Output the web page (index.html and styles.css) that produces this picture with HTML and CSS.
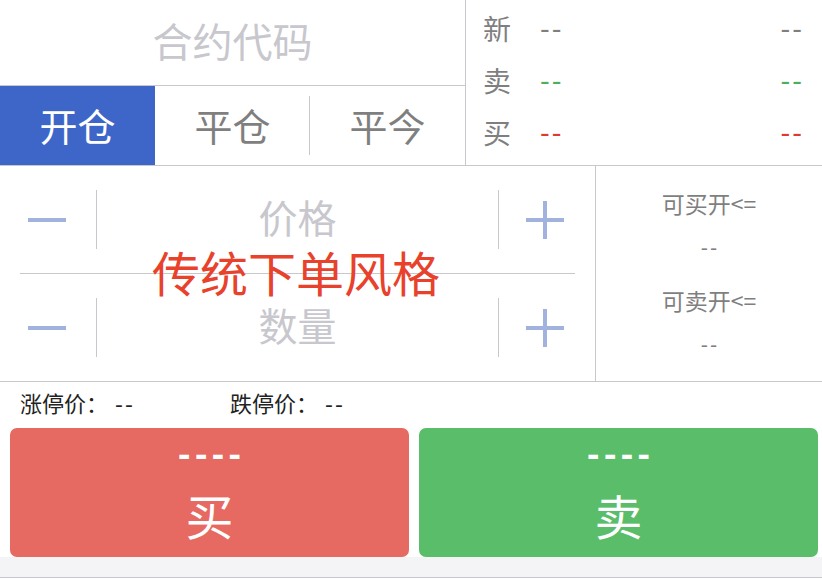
FILE: index.html
```html
<!DOCTYPE html>
<html lang="zh">
<head>
<meta charset="utf-8">
<title>下单</title>
<link rel="stylesheet" href="styles.css">
</head>
<body>
<div class="top">
  <div class="left">
    <div class="code">合约代码</div>
    <ul class="tabs">
      <li class="active">开仓</li>
      <li>平仓</li>
      <li class="sep">平今</li>
    </ul>
  </div>
  <div class="quote">
    <div class="row"><span class="lbl">新</span><span class="val">--</span><span class="val">--</span></div>
    <div class="row sell"><span class="lbl">卖</span><span class="val">--</span><span class="val">--</span></div>
    <div class="row buy"><span class="lbl">买</span><span class="val">--</span><span class="val">--</span></div>
  </div>
</div>

<div class="mid">
  <div class="steps">
    <div class="step price">
      <div class="minus"><span class="bar"></span></div>
      <div class="field">价格</div>
      <div class="plus"><span class="bar"></span><span class="bar v"></span></div>
    </div>
    <div class="step">
      <div class="minus"><span class="bar"></span></div>
      <div class="field">数量</div>
      <div class="plus"><span class="bar"></span><span class="bar v"></span></div>
    </div>
    <div class="note">传统下单风格</div>
  </div>
  <div class="avail">
    <div class="cap">可买开&lt;=</div>
    <div class="num">--</div>
    <div class="cap">可卖开&lt;=</div>
    <div class="num">--</div>
  </div>
</div>

<div class="limits">
  <span class="lim">涨停价：<span class="dash">--</span></span>
  <span class="lim">跌停价：<span class="dash">--</span></span>
</div>

<div class="btns">
  <a class="btn red"><span class="p">----</span><span class="t">买</span></a>
  <a class="btn green"><span class="p">----</span><span class="t">卖</span></a>
</div>
<div class="foot"></div>
</body>
</html>
```

FILE: styles.css
```css
body {
    margin: 0;
    width: 822px;
    font-family: "Noto Sans CJK SC", "Noto Sans", sans-serif;
    background: #fff;
}
.top {
    display: flex;
    height: 165px;
    border-bottom: 1px solid #c8c7cc;
}
.left {
    width: 465px;
    border-right: 1px solid #c8c7cc;
    display: flex;
    flex-direction: column;
}
.code {
    height: 86px;
    padding-bottom: 6px;
    box-sizing: border-box;
    border-bottom: 1px solid #c8c7cc;
    display: flex;
    align-items: center;
    justify-content: center;
    font-size: 40px;
    color: #c7c7cd;
}
.tabs {
    display: flex;
    margin: 0; padding: 0;
    list-style: none;
    flex: 1;
}
.tabs li {
    width: 155px;
    display: flex;
    align-items: center;
    justify-content: center;
    padding-bottom: 3px;
    font-size: 38px;
    color: #7f7f7f;
    position: relative;
}
.tabs li.active {
    background: #3e66c9;
    color: #fff;
}
.tabs li.sep:before {
    content: "";
    position: absolute;
    left: -1px; top: 10px; bottom: 10px;
    border-left: 1px solid #c8c7cc;
}
.quote {
    flex: 1;
    padding: 2px 18px 0 17px;
}
.quote .row {
    display: flex;
    align-items: center;
    height: 52px;
}
.quote .lbl {
    font-size: 28px;
    color: #7f7f7f;
    width: 57px;
}
.quote .val {
    font-family: "DejaVu Sans", sans-serif;
    font-size: 27px;
    color: #7f7f7f;
    letter-spacing: 2px;
}
.quote .val + .val {
    margin-left: auto;
}
.quote .sell .val { color: #4caf5c; }
.quote .buy .val { color: #e0392f; }

.mid {
    display: flex;
    height: 215px;
    border-bottom: 1px solid #c8c7cc;
}
.steps {
    width: 555px;
    padding: 0 20px;
    border-right: 1px solid #c8c7cc;
    display: flex;
    flex-direction: column;
    position: relative;
}
.step {
    flex: 1 1 0;
    min-height: 0;
    display: flex;
    padding: 24px 0;
}
.step.price {
    border-bottom: 1px solid #c8c7cc;
}
.minus, .plus {
    width: 76px;
    position: relative;
}
.minus { border-right: 1px solid #c8c7cc; }
.plus { border-left: 1px solid #c8c7cc; }
.bar {
    position: absolute;
    top: 50%;
    height: 4px;
    width: 38px;
    margin-top: -2px;
    background: #a1b2df;
}
.minus .bar { left: 8px; }
.plus .bar { left: 27px; }
.plus .bar.v {
    height: 38px; width: 4px;
    margin-top: -19px;
    left: 44px;
}
.field {
    flex: 1;
    display: flex;
    align-items: center;
    justify-content: center;
    margin-top: -8px;
    font-size: 39px;
    color: #c7c7cd;
}
.note {
    position: absolute;
    left: 152px; top: 73px;
    font-size: 48px;
    line-height: 64px;
    color: #e8412c;
}
.avail {
    flex: 1;
    display: flex;
    flex-direction: column;
    align-items: center;
    padding-top: 17px;
    color: #7f7f7f;
}
.avail .cap {
    font-size: 23px;
    height: 40px;
    line-height: 40px;
}
.avail .num {
    font-family: "DejaVu Sans", sans-serif;
    font-size: 20px;
    height: 57px;
    line-height: 50px;
    letter-spacing: 2px;
    padding-left: 2px;
}
.limits {
    height: 46px;
    display: flex;
    align-items: center;
    padding-left: 20px;
    padding-bottom: 6px;
    box-sizing: border-box;
    font-size: 22px;
    color: #222;
}
.lim { width: 210px; }
.dash {
    font-family: "DejaVu Sans", sans-serif;
    margin-left: 7px;
    letter-spacing: 2px;
}
.btns {
    display: flex;
    gap: 10px;
    padding: 0 4px 0 10px;
}
.btn {
    flex: 1;
    height: 129px;
    border-radius: 7px;
    display: flex;
    flex-direction: column;
    align-items: center;
    color: #fff;
}
.btn.red { background: #e66962; }
.btn.green { background: #59bd6a; }
.btn .p {
    font-family: "DejaVu Sans", sans-serif;
    font-size: 31px;
    font-weight: bold;
    letter-spacing: 4px;
    padding-left: 4px;
    line-height: 30px;
    margin-top: 12px;
}
.btn .t {
    font-size: 48px;
    line-height: 60px;
    margin-top: 14px;
}
.foot {
    height: 20px;
    background: #f4f4f6;
    border-bottom: 1px solid #c8c7cc;
}
```
